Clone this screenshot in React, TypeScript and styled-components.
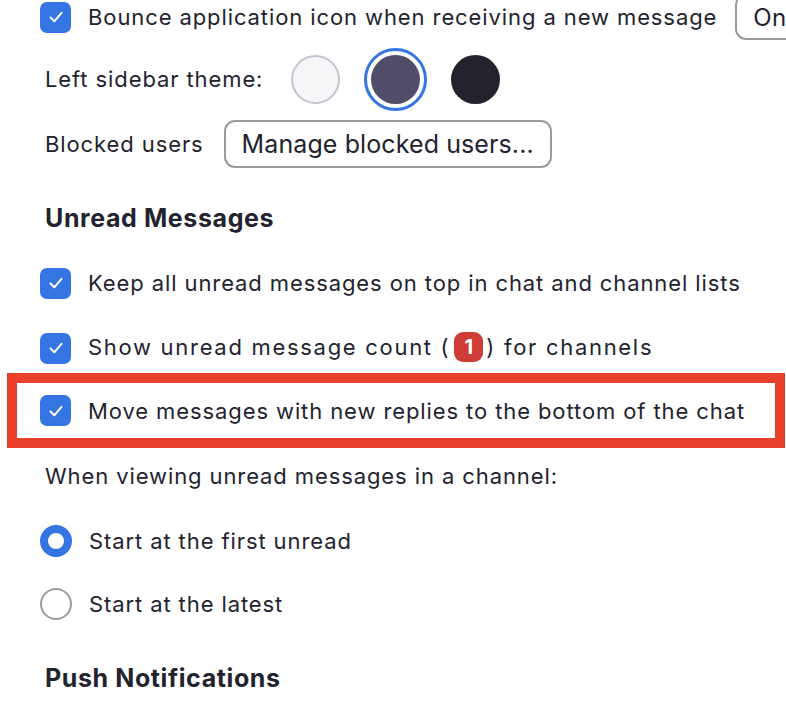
import React from "react";
import styled, { createGlobalStyle } from "styled-components";

const Global = createGlobalStyle`
  html, body { margin: 0; padding: 0; background: #ffffff; }
  body { font-family: Inter, "Noto Sans", sans-serif; color: #23232f; overflow: hidden; }
`;

const Page = styled.div`
  width: 786px;
  height: 708px;
  display: flex;
  flex-direction: column;
  overflow: hidden;
`;

const Row = styled.div<{ $top: number; $left?: number; $h?: number }>`
  display: flex;
  align-items: center;
  height: ${(p) => p.$h ?? 48}px;
  margin-top: ${(p) => p.$top}px;
  padding-left: ${(p) => p.$left ?? 40}px;
  flex-shrink: 0;
  white-space: nowrap;
`;

const Label = styled.span<{ $gap?: number; $ls?: number }>`
  font-size: 22px;
  letter-spacing: ${(p) => p.$ls ?? 0.9}px;
  margin-left: ${(p) => p.$gap ?? 17}px;
`;

const Plain = styled.span`
  font-size: 22px;
  letter-spacing: 0.9px;
`;

const Heading = styled.span`
  font-size: 25px;
  font-weight: 700;
  letter-spacing: 0.6px;
`;

const Box = styled.span`
  width: 31px;
  height: 31px;
  border-radius: 7px;
  background: #3574e3;
  display: inline-flex;
  align-items: center;
  justify-content: center;
  flex-shrink: 0;
`;

const Check = () => (
  <Box>
    <svg width="18" height="18" viewBox="0 0 18 18" fill="none">
      <path d="M3.5 9.5 L7.3 13.3 L14.5 4.8" stroke="#fff" strokeWidth="2" strokeLinecap="round" strokeLinejoin="round" />
    </svg>
  </Box>
);

const Radio = styled.span<{ $on?: boolean }>`
  width: 32px;
  height: 32px;
  border-radius: 50%;
  box-sizing: border-box;
  flex-shrink: 0;
  background: #fff;
  border: ${(p) => (p.$on ? "8.5px solid #3574e3" : "2px solid #9c9c9f")};
`;

const OnButton = styled.span`
  margin-left: 18px;
  height: 46px;
  padding: 0 10px 0 16px;
  border: 2px solid #9a9a9e;
  border-right: none;
  border-radius: 11px 0 0 11px;
  box-sizing: border-box;
  display: inline-flex;
  align-items: center;
  font-size: 24px;
  letter-spacing: 0.3px;
`;

const Swatch = styled.span<{ $fill: string; $border?: string }>`
  width: 49px;
  height: 49px;
  border-radius: 50%;
  box-sizing: border-box;
  background: ${(p) => p.$fill};
  border: ${(p) => (p.$border ? `2px solid ${p.$border}` : "none")};
  flex-shrink: 0;
`;

const SelectedRing = styled.span`
  width: 63px;
  height: 63px;
  border-radius: 50%;
  box-sizing: border-box;
  border: 3px solid #3574e3;
  display: inline-flex;
  align-items: center;
  justify-content: center;
  flex-shrink: 0;
`;

const Swatches = styled.span`
  display: inline-flex;
  align-items: center;
  gap: 24px;
  margin-left: 28px;
`;

const Button = styled.span`
  margin-left: 20px;
  height: 48px;
  padding: 0 16px;
  border: 2px solid #9a9a9e;
  border-radius: 11px;
  box-sizing: border-box;
  display: inline-flex;
  align-items: center;
  font-size: 25px;
  letter-spacing: 0.1px;
`;

const Badge = styled.span`
  display: inline-flex;
  align-items: center;
  justify-content: center;
  width: 29px;
  height: 30px;
  border-radius: 9px;
  background: #cf3b36;
  color: #fff;
  font-weight: 700;
  font-size: 20px;
  letter-spacing: 0;
  vertical-align: middle;
  margin: -4px 3px 0 4px;
`;

const Highlight = styled.div`
  margin-top: 1px;
  margin-left: 7px;
  width: 778px;
  height: 75px;
  box-sizing: border-box;
  border: 10px solid #e8402a;
  display: flex;
  align-items: center;
  padding-left: 23px;
  flex-shrink: 0;
  white-space: nowrap;
`;

export default function App() {
  return (
    <>
      <Global />
      <Page>
        <Row $top={-7}>
          <Check />
          <Label>Bounce application icon when receiving a new message</Label>
          <OnButton>On</OnButton>
        </Row>
        <Row $top={14} $left={45}>
          <Plain>Left sidebar theme:</Plain>
          <Swatches>
            <Swatch $fill="#f6f6f9" $border="#c6c4d1" />
            <SelectedRing>
              <Swatch $fill="#4f4d68" />
            </SelectedRing>
            <Swatch $fill="#23232e" />
          </Swatches>
        </Row>
        <Row $top={17} $left={45}>
          <Plain>Blocked users</Plain>
          <Button>Manage blocked users...</Button>
        </Row>
        <Row $top={26} $left={45}>
          <Heading>Unread Messages</Heading>
        </Row>
        <Row $top={17}>
          <Check />
          <Label>Keep all unread messages on top in chat and channel lists</Label>
        </Row>
        <Row $top={17}>
          <Check />
          <Label $ls={1.7}>
            Show unread message count (<Badge>1</Badge>) for channels
          </Label>
        </Row>
        <Highlight>
          <Check />
          <Label>Move messages with new replies to the bottom of the chat</Label>
        </Highlight>
        <Row $top={4} $left={45}>
          <Plain>When viewing unread messages in a channel:</Plain>
        </Row>
        <Row $top={17}>
          <Radio $on />
          <Label>Start at the first unread</Label>
        </Row>
        <Row $top={15}>
          <Radio />
          <Label>Start at the latest</Label>
        </Row>
        <Row $top={26} $left={45}>
          <Heading>Push Notifications</Heading>
        </Row>
      </Page>
    </>
  );
}
